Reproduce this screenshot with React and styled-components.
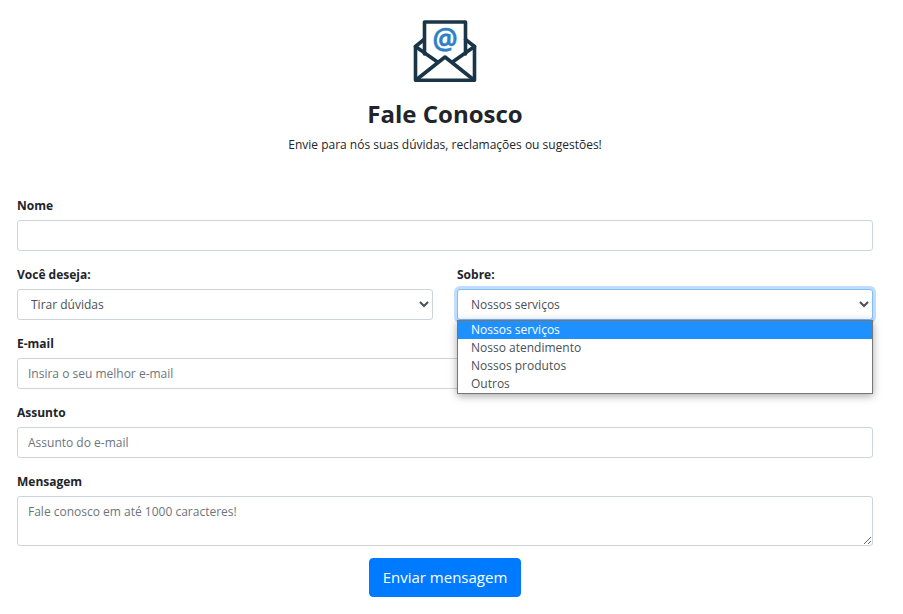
import React from "react";
import styled, { createGlobalStyle, css } from "styled-components";

const GlobalStyle = createGlobalStyle`
  *, *::before, *::after { box-sizing: border-box; }
  body {
    margin: 0;
    background: #fff;
    color: #212529;
    font-family: "Segoe UI", "Open Sans", "Noto Sans", sans-serif;
    font-size: 12px;
    line-height: 18px;
  }
`;

const Page = styled.main`
  padding: 19px 30px 16px 17px;
`;

const Header = styled.header`
  display: flex;
  flex-direction: column;
  align-items: center;
  text-align: center;
  margin-bottom: 41px;
`;

const Title = styled.h1`
  margin: 16px 0 6px;
  font-size: 24px;
  line-height: 30px;
  font-weight: 700;
`;

const Subtitle = styled.p`
  margin: 0;
  line-height: 20px;
`;

const Form = styled.form`
  display: flex;
  flex-direction: column;
  gap: 12px;
`;

const Fields = styled.div`
  display: flex;
  flex-direction: column;
  gap: 14px;
`;

const Row = styled.div`
  display: grid;
  grid-template-columns: 1fr 1fr;
  gap: 24px;
`;

const Field = styled.div`
  position: relative;
  display: flex;
  flex-direction: column;
  gap: 4px;
`;

const Label = styled.label`
  align-self: flex-start;
  line-height: 20px;
  font-weight: 700;
`;

const controlStyles = css`
  width: 100%;
  height: 31px;
  margin: 0;
  border: 1px solid #ced4da;
  border-radius: 3px;
  background-color: #fff;
  color: #495057;
  font: inherit;
  outline: none;
`;

const Input = styled.input`
  ${controlStyles}
  padding: 4px 10px;
  &::placeholder { color: #6c757d; opacity: 1; }
`;

const Select = styled.select`
  ${controlStyles}
  padding: 4px 9px;
  ${({ $open }) =>
    $open &&
    css`
      border-color: #80bdff;
      box-shadow: 0 0 0 3px rgba(0, 123, 255, 0.25);
    `}
`;

const TextArea = styled.textarea`
  ${controlStyles}
  display: block;
  height: 50px;
  padding: 6px 10px;
  resize: vertical;
  &::placeholder { color: #6c757d; opacity: 1; }
`;

const Menu = styled.ul`
  position: absolute;
  z-index: 1;
  top: 100%;
  left: 0;
  right: 0;
  margin: 0;
  padding: 0;
  list-style: none;
  border: 1px solid #767676;
  background: #fff;
  box-shadow: 0 2px 8px rgba(0, 0, 0, 0.35);
`;

const Option = styled.li`
  padding: 0 13px;
  line-height: 18px;
  color: ${({ $active }) => ($active ? "#fff" : "#495057")};
  background: ${({ $active }) => ($active ? "#1e90ff" : "transparent")};
`;

const SubmitButton = styled.button`
  align-self: center;
  padding: 7px 13px;
  border: 1px solid #007bff;
  border-radius: 4px;
  background: #007bff;
  color: #fff;
  font-family: inherit;
  font-size: 15px;
  line-height: 23px;
`;

const At = styled.text`
  font-family: "Open Sans", sans-serif;
  font-size: 28px;
  font-weight: 600;
  fill: #2f7fc6;
  stroke: #2f7fc6;
  stroke-width: 0.6;
`;

function EnvelopeIcon() {
  return (
    <svg width="64" height="64" viewBox="0 0 64 64" fill="none" aria-hidden="true">
      <g stroke="#1b3548" strokeWidth="3.6" strokeLinejoin="round" strokeLinecap="round">
        <path d="M11.500 35V3H52.500V35" />
        <path d="M11 20.500L2.500 27.500V61.300H61.500V27.500L52.500 20.500" />
        <path d="M2.500 27.500L24.500 43M61.500 27.500L39.500 43" />
        <path d="M3 61L32 38L61 61" />
      </g>
      <At x="32" y="30" textAnchor="middle">@</At>
    </svg>
  );
}

const topics = ["Nossos serviços", "Nosso atendimento", "Nossos produtos", "Outros"];

export default function App() {
  const [topic, setTopic] = React.useState(topics[0]);

  return (
    <>
      <GlobalStyle />
      <Page>
        <Header>
          <EnvelopeIcon />
          <Title>Fale Conosco</Title>
          <Subtitle>Envie para nós suas dúvidas, reclamações ou sugestões!</Subtitle>
        </Header>
        <Form onSubmit={(e) => e.preventDefault()}>
          <Fields>
            <Field>
              <Label htmlFor="nome">Nome</Label>
              <Input id="nome" type="text" />
            </Field>
            <Row>
              <Field>
                <Label htmlFor="deseja">Você deseja:</Label>
                <Select id="deseja">
                  <option>Tirar dúvidas</option>
                </Select>
              </Field>
              <Field>
                <Label htmlFor="sobre">Sobre:</Label>
                <Select id="sobre" $open value={topic} onChange={(e) => setTopic(e.target.value)}>
                  {topics.map((t) => (
                    <option key={t}>{t}</option>
                  ))}
                </Select>
                <Menu role="listbox" aria-label="Sobre">
                  {topics.map((t) => (
                    <Option
                      key={t}
                      role="option"
                      aria-selected={t === topic}
                      $active={t === topic}
                      onClick={() => setTopic(t)}
                    >
                      {t}
                    </Option>
                  ))}
                </Menu>
              </Field>
            </Row>
            <Field>
              <Label htmlFor="email">E-mail</Label>
              <Input id="email" type="email" placeholder="Insira o seu melhor e-mail" />
            </Field>
            <Field>
              <Label htmlFor="assunto">Assunto</Label>
              <Input id="assunto" type="text" placeholder="Assunto do e-mail" />
            </Field>
            <Field>
              <Label htmlFor="mensagem">Mensagem</Label>
              <TextArea id="mensagem" placeholder="Fale conosco em até 1000 caracteres!" />
            </Field>
          </Fields>
          <SubmitButton type="submit">Enviar mensagem</SubmitButton>
        </Form>
      </Page>
    </>
  );
}
